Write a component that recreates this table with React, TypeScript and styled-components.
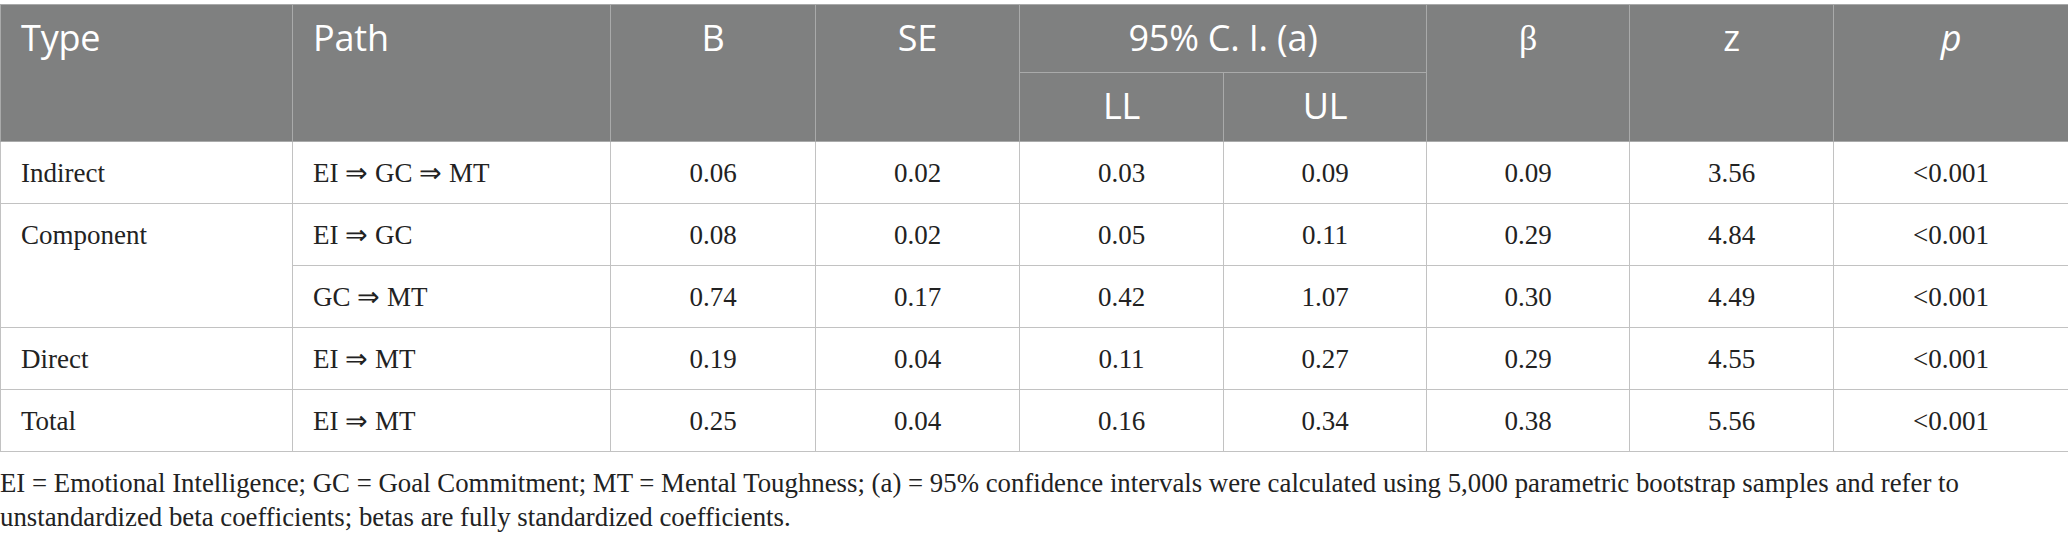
import React from "react";
import styled, { createGlobalStyle } from "styled-components";

const Global = createGlobalStyle`
  html, body { margin: 0; padding: 0; background: #ffffff; }
  body { width: 2068px; }
`;

const Page = styled.div`
  padding-top: 4px;
  width: 2068px;
`;

const Table = styled.table`
  width: 2068px;
  border-collapse: collapse;
  table-layout: fixed;
  border: 1px solid #c2c2c2;
`;

const HeadRow = styled.tr<{ $h: number }>`
  height: ${(p) => p.$h}px;
`;

const Th = styled.th<{ $align?: "left" | "center"; $italic?: boolean; $serif?: boolean }>`
  background: #7f8080;
  color: #ffffff;
  font-family: ${(p) => (p.$serif ? '"Liberation Serif", serif' : '"Open Sans", sans-serif')};
  font-weight: 400;
  font-style: ${(p) => (p.$italic ? "italic" : "normal")};
  font-size: 36px;
  line-height: 40px;
  letter-spacing: -0.2px;
  text-align: ${(p) => p.$align ?? "center"};
  vertical-align: top;
  padding: 13px 20px 0 20px;
  border: 1px solid #a9aaaa;
`;

const BodyRow = styled.tr`
  height: 62px;
`;

const Td = styled.td<{ $align?: "left" | "center" }>`
  font-family: "Liberation Serif", serif;
  font-size: 27px;
  line-height: 30px;
  color: #222222;
  text-align: ${(p) => p.$align ?? "center"};
  vertical-align: top;
  padding: 16px 20px 0 20px;
  border: 1px solid #c2c2c2;
  white-space: nowrap;
`;

const Note = styled.p`
  margin: 14px 0 0 0;
  font-family: "Liberation Serif", serif;
  font-size: 26.8px;
  line-height: 34px;
  color: #222222;
  width: 2040px;
`;

const widths = [292, 318, 205, 204, 204, 203, 203, 204, 235];

type Row = {
  type?: string;
  span?: number;
  path: string;
  vals: string[];
};

const rows: Row[] = [
  { type: "Indirect", path: "EI ⇒ GC ⇒ MT", vals: ["0.06", "0.02", "0.03", "0.09", "0.09", "3.56", "<0.001"] },
  { type: "Component", span: 2, path: "EI ⇒ GC", vals: ["0.08", "0.02", "0.05", "0.11", "0.29", "4.84", "<0.001"] },
  { path: "GC ⇒ MT", vals: ["0.74", "0.17", "0.42", "1.07", "0.30", "4.49", "<0.001"] },
  { type: "Direct", path: "EI ⇒ MT", vals: ["0.19", "0.04", "0.11", "0.27", "0.29", "4.55", "<0.001"] },
  { type: "Total", path: "EI ⇒ MT", vals: ["0.25", "0.04", "0.16", "0.34", "0.38", "5.56", "<0.001"] },
];

export default function App() {
  return (
    <>
      <Global />
      <Page>
        <Table>
          <colgroup>
            {widths.map((w, i) => (
              <col key={i} style={{ width: w }} />
            ))}
          </colgroup>
          <thead>
            <HeadRow $h={68}>
              <Th $align="left" rowSpan={2}>Type</Th>
              <Th $align="left" rowSpan={2}>Path</Th>
              <Th rowSpan={2}>B</Th>
              <Th rowSpan={2}>SE</Th>
              <Th colSpan={2}>95% C. I. (a)</Th>
              <Th $serif rowSpan={2}>β</Th>
              <Th rowSpan={2}>z</Th>
              <Th $italic rowSpan={2}>p</Th>
            </HeadRow>
            <HeadRow $h={69}>
              <Th>LL</Th>
              <Th>UL</Th>
            </HeadRow>
          </thead>
          <tbody>
            {rows.map((r, i) => (
              <BodyRow key={i}>
                {r.type !== undefined && (
                  <Td $align="left" rowSpan={r.span ?? 1}>{r.type}</Td>
                )}
                <Td $align="left">{r.path}</Td>
                {r.vals.map((v, j) => (
                  <Td key={j}>{v}</Td>
                ))}
              </BodyRow>
            ))}
          </tbody>
        </Table>
        <Note>
          EI = Emotional Intelligence; GC = Goal Commitment; MT = Mental Toughness; (a) = 95% confidence intervals were calculated using 5,000 parametric bootstrap samples and refer to unstandardized beta coefficients; betas are fully standardized coefficients.
        </Note>
      </Page>
    </>
  );
}
